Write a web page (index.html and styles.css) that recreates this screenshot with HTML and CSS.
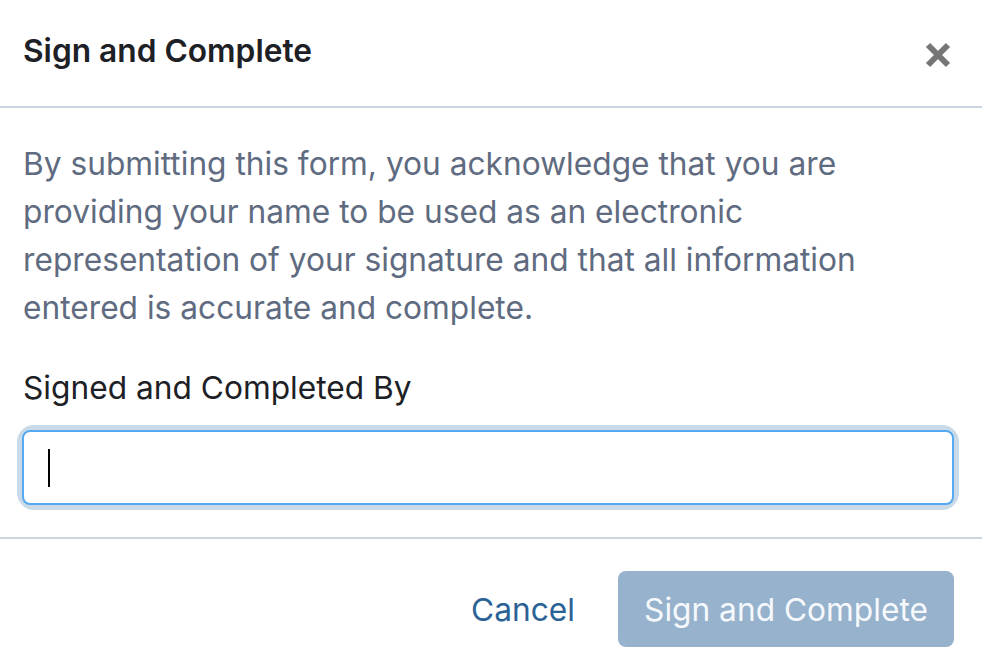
FILE: index.html
```html
<!DOCTYPE html>
<html lang="en">
<head>
<meta charset="utf-8">
<title>Sign and Complete</title>
<link rel="stylesheet" href="styles.css">
</head>
<body>
<div class="modal">
  <div class="modal-header">
    <h1 class="modal-title">Sign and Complete</h1>
    <button class="close-btn" aria-label="Close">
      <svg width="26" height="26" viewBox="0 0 26 26"><path d="M3 3 L23 23 M23 3 L3 23" stroke="#767676" stroke-width="6" fill="none"/></svg>
    </button>
  </div>
  <div class="modal-body">
    <p class="notice">By submitting this form, you acknowledge that you are providing your name to be used as an electronic representation of your signature and that all information entered is accurate and complete.</p>
    <label class="field-label">Signed and Completed By</label>
    <div class="input-ring">
      <div class="text-input"><span class="caret"></span></div>
    </div>
  </div>
  <div class="modal-footer">
    <button class="btn-link">Cancel</button>
    <button class="btn-primary" disabled>Sign and Complete</button>
  </div>
</div>
</body>
</html>
```
FILE: styles.css
```css
html, body {
  margin: 0;
  padding: 0;
  background: #ffffff;
}
body {
  font-family: Inter, "Noto Sans", sans-serif;
  overflow: hidden;
}
.modal {
  width: 982px;
}
.modal-header {
  display: flex;
  align-items: center;
  justify-content: space-between;
  padding: 0 31px 0 23px;
  border-bottom: 2px solid #cbd5e1;
  box-sizing: border-box;
  height: 108px;
}
.modal-title {
  margin: 0;
  font-size: 31.7px;
  font-weight: 600;
  color: #1d2025;
  padding-bottom: 6px;
}
.close-btn {
  border: 0;
  background: none;
  padding: 0;
  display: flex;
  margin-top: 4px;
}
.modal-body {
  padding: 32px 28px 32px 22px;
  border-bottom: 2px solid #cbd5e1;
  display: flex;
  flex-direction: column;
}
.notice {
  margin: 0 0 0 1px;
  font-size: 31.7px;
  line-height: 48px;
  color: #5f6b80;
}
.field-label {
  margin: 32px 0 18px 1px;
  font-size: 31.7px;
  line-height: 48px;
  color: #1d2025;
}
.input-ring {
  border-radius: 12px;
  box-shadow: 0 0 0 5px #c9d9e7;
}
.text-input {
  height: 75px;
  box-sizing: border-box;
  border: 2px solid #55a8f2;
  border-radius: 8px;
  background: #fff;
  display: flex;
  align-items: center;
  padding-left: 24px;
}
.caret {
  width: 2px;
  height: 38px;
  background: #000;
}
.modal-footer {
  display: flex;
  justify-content: flex-end;
  align-items: center;
  gap: 43px;
  padding: 32px 28px 0 0;
}
.btn-link {
  border: 0;
  background: none;
  padding: 0;
  font-family: inherit;
  font-size: 31.7px;
  color: #2a6296;
}
.btn-primary {
  border: 0;
  width: 336px;
  height: 76px;
  border-radius: 8px;
  background: #96b2cd;
  color: #f6f9fc;
  font-family: inherit;
  font-size: 31.7px;
}
```
